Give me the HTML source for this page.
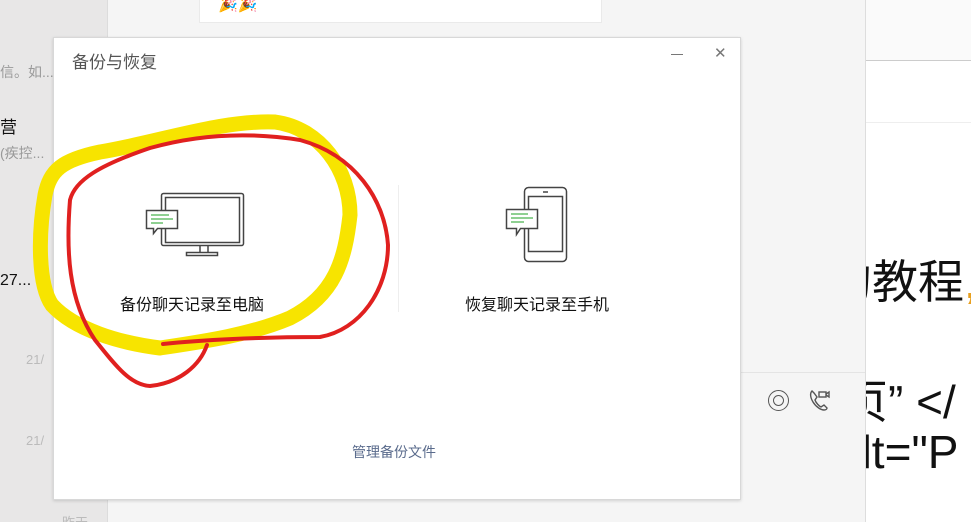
<!DOCTYPE html>
<html><head><meta charset="utf-8"><style>
*{margin:0;padding:0;box-sizing:border-box}
html,body{width:971px;height:522px;overflow:hidden}
body{position:relative;background:#f5f5f5;font-family:"Liberation Sans","Noto Sans CJK SC",sans-serif}
.a{position:absolute;white-space:nowrap}
</style></head><body>
<div class="a" style="left:0;top:0;width:107px;height:522px;background:#e8e7e7"></div>
<div class="a" style="left:107px;top:0;width:1px;height:522px;background:#dcdcdc"></div>
<div class="a" style="left:199px;top:0;width:403px;height:23px;background:#fff;border:1px solid #eaeaea;border-top:none"></div>
<div class="a" style="left:218px;top:-6px;font-size:16px">🎉🎉</div>
<div class="a" style="left:741px;top:372px;width:124px;height:1px;background:#e4e4e4"></div>
<div class="a" style="left:768px;top:390px;width:21px;height:21px;border:1.5px solid #555;border-radius:50%"></div>
<div class="a" style="left:773px;top:395px;width:11px;height:11px;border:1.5px solid #555;border-radius:50%"></div>
<svg class="a" style="left:808px;top:388px" width="24" height="24" viewBox="0 0 24 24" fill="none" stroke="#555" stroke-width="1.4"><path d="M4 3c-2 2-2 6 1 11s8 8 11 8c2 0 3-1 3-2l-3-3-3 2c-2-1-5-4-6-7l2-3-3-4z"/><rect x="11" y="4" width="7" height="5"/><path d="M18 6l3-2v5l-3-2"/></svg>
<div class="a" style="left:865px;top:0;width:106px;height:522px;background:#fff;border-left:1px solid #ddd;overflow:hidden">
<div class="a" style="left:0;top:0;width:106px;height:61px;background:#fafafa;border-bottom:1px solid #ccc"></div>
<div class="a" style="left:0;top:122px;width:106px;height:1px;background:#eee"></div>
<div class="a" style="left:-40px;top:246px;font-size:46px;color:#111">的教程<span style="color:#e8a020">,</span></div>
<div class="a" style="left:-24px;top:366px;font-size:46px;color:#111">页” &lt;/</div>
<div class="a" style="left:-30px;top:425px;font-size:46px;color:#111">alt="P</div>
</div>
<div class="a" style="left:0;top:62px;font-size:14px;color:#999">信。如...</div>
<div class="a" style="left:0;top:113px;font-size:17px;color:#111">营</div>
<div class="a" style="left:0;top:143px;font-size:14px;color:#999">(疾控...</div>
<div class="a" style="left:44px;top:192px;font-size:13px;color:#bbb">2</div>
<div class="a" style="left:0;top:272px;font-size:16px;color:#111">27...</div>
<div class="a" style="left:36px;top:274px;font-size:13px;color:#bbb">21</div>
<div class="a" style="left:26px;top:352px;font-size:13px;color:#bbb">21/</div>
<div class="a" style="left:26px;top:433px;font-size:13px;color:#bbb">21/</div>
<div class="a" style="left:62px;top:512px;font-size:13px;color:#bbb">昨天</div>
<div class="a" style="left:53px;top:37px;width:688px;height:463px;background:#fff;border:1px solid #d8d8d8;box-shadow:0 1px 3px rgba(0,0,0,.15)">
<div class="a" style="left:18px;top:10px;font-size:17px;color:#555">备份与恢复</div>
<div class="a" style="left:617px;top:16px;width:12px;height:1px;background:#777"></div>
<div class="a" style="left:660px;top:6px;font-size:15px;color:#777">✕</div>
<div class="a" style="left:344px;top:147px;width:1px;height:127px;background:#eee"></div>
<div class="a" style="left:66px;top:253px;font-size:16px;color:#111">备份聊天记录至电脑</div>
<div class="a" style="left:411px;top:253px;font-size:16px;color:#111">恢复聊天记录至手机</div>
<div class="a" style="left:298px;top:404px;font-size:14px;color:#5a6b8c">管理备份文件</div>
</div>
<svg class="a" style="left:0;top:0" width="971" height="522">
<g fill="#fff" stroke="#444" stroke-width="1.5">
<rect x="161.5" y="193.5" width="82" height="52" rx="2"/><rect x="165.5" y="197.5" width="74" height="45"/>
<path d="M200 246v6M208 246v6M186.5 252.5h31v3h-31z"/>
<rect x="524.5" y="187.5" width="42" height="74" rx="4"/><rect x="528.5" y="196.5" width="34" height="55"/>
<path d="M543 192h5"/>
<path d="M146.5 210.5h31v18h-20l-4 5v-5h-7z"/>
<path d="M506.5 209.5h31v19h-17l-4 6v-6h-10z"/>
</g>
<g stroke="#6ac16e" stroke-width="1.5"><path d="M151 215h18M151 219h22M151 223h12M511 214h17M511 218h22M511 222h13"/></g>
<path d="M160 348C120 343 75 330 52 305 38 285 38 235 45 195 50 170 62 160 100 152 160 142 220 120 275 122 320 128 350 170 350 215 345 260 335 295 290 318 250 335 200 342 160 348" fill="none" stroke="#f7e400" stroke-width="15" stroke-linecap="round"/>
<path d="M163 344C200 340 260 337 320 337 360 330 388 290 388 245 385 200 355 155 300 140 250 132 200 134 150 148 100 165 75 180 70 200 66 250 68 300 95 340 115 365 130 385 150 386 180 383 200 365 207 345" fill="none" stroke="#e0201f" stroke-width="4" stroke-linecap="round"/>
</svg>
</body></html>
